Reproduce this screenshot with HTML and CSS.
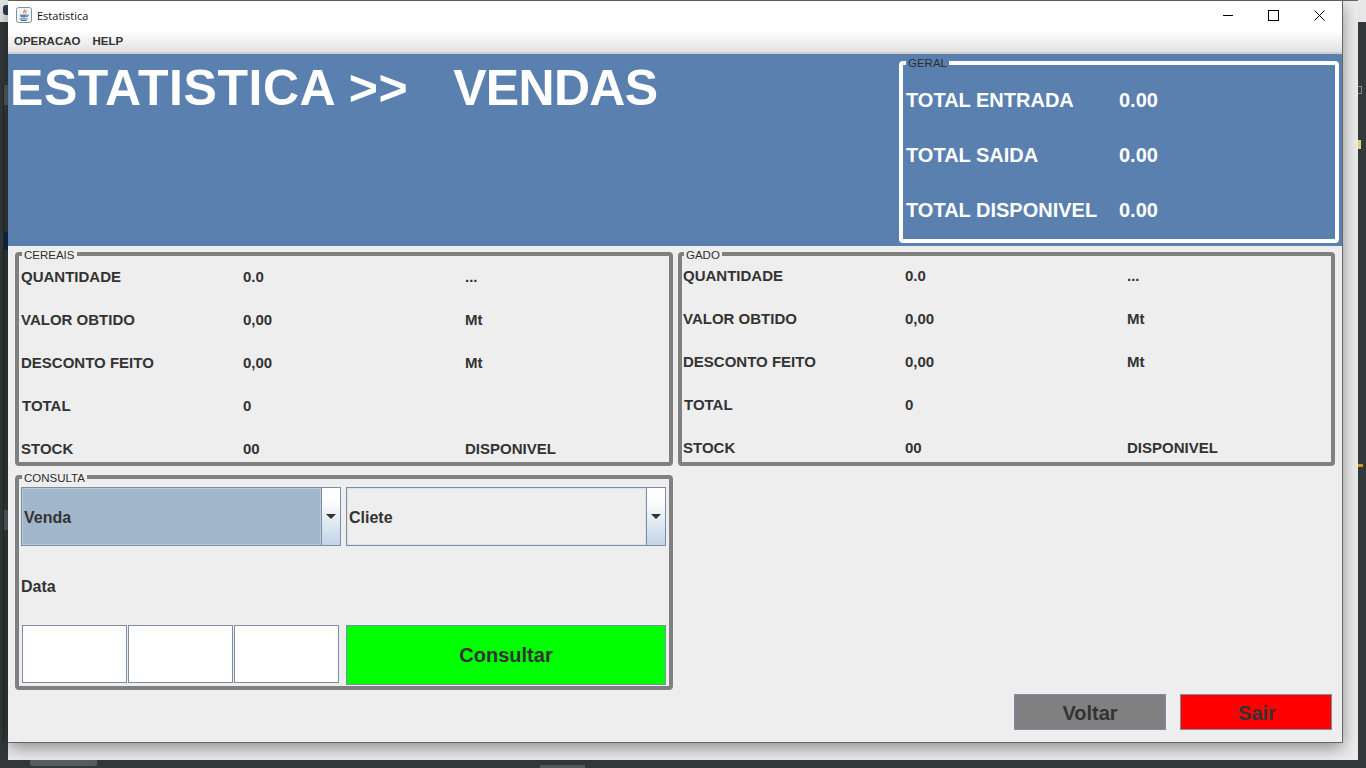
FILE: index.html
```html
<!DOCTYPE html>
<html lang="en">
<head>
    <meta charset="UTF-8">
    <meta name="viewport" content="width=device-width, initial-scale=1.0">
    <title>Estatistica</title>
    <link rel="stylesheet" href="styles.css">
</head>
<body>
    <div class="desktop">
        <!-- Bits of the desktop that show around the window -->
        <div class="top-strip"></div>
        <div class="bit bit-blob"></div>
        <div class="bit bit-line"></div>
        <div class="bit bit-gray-a"></div>
        <div class="bit bit-navy"></div>
        <div class="bit bit-gray-b"></div>
        <div class="bit bit-square"></div>
        <div class="bit bit-yellow"></div>
        <div class="bit bit-orange"></div>
        <div class="bit bit-task-a"></div>
        <div class="bit bit-task-b"></div>

        <div class="back-window"></div>

        <div class="window">
            <div class="titlebar">
                <svg class="app-icon" width="16" height="16" viewBox="0 0 16 16">
                    <rect x="0.5" y="0.5" width="15" height="15" rx="2" fill="#f2f5f8" stroke="#7f8fa0"/>
                    <path d="M8.5 2.5c1 1.2-1.5 2-.8 3.5M10.2 3.5c.5 1-1.5 1.5-.8 2.7" fill="none" stroke="#e2702a" stroke-width="1.1"/>
                    <path d="M4 7.5h6.5c0 1.5-.5 2.5-1.5 3H5.500C4.500 10 4 9 4 7.500z" fill="#5b82a8"/>
                    <path d="M10.500 8h1.500c.8 0 .6 1.500-1.800 1.800M3.500 12h8M5 13.500h5.500" fill="none" stroke="#4a6f96" stroke-width="1"/>
                </svg>
                <span class="title-text">Estatistica</span>
                <div class="window-controls">
                    <svg width="11" height="11" viewBox="0 0 11 11"><path d="M1 5.500h10" stroke="#000" fill="none"/></svg>
                    <svg width="11" height="11" viewBox="0 0 11 11"><rect x="0.5" y="0.5" width="10" height="10" stroke="#000" fill="none"/></svg>
                    <svg width="11" height="11" viewBox="0 0 11 11"><path d="M0.5 0.5l10 10M10.500 0.5l-10 10" stroke="#000" fill="none"/></svg>
                </div>
            </div>

            <div class="menubar">
                <span>OPERACAO</span>
                <span>HELP</span>
            </div>

            <div class="banner">
                <div class="banner-title">
                    <span class="banner-main">ESTATISTICA &gt;&gt;</span>
                    <span class="banner-sub">VENDAS</span>
                </div>
                <div class="group group-white">
                    <span class="group-title">GERAL</span>
                    <div class="totals">
                        <span>TOTAL ENTRADA</span><span>0.00</span>
                        <span>TOTAL SAIDA</span><span>0.00</span>
                        <span>TOTAL DISPONIVEL</span><span>0.00</span>
                    </div>
                </div>
            </div>

            <div class="panels">
                <div class="group">
                    <span class="group-title">CEREAIS</span>
                    <div class="stats">
                        <span>QUANTIDADE</span><span>0.0</span><span>...</span>
                        <span>VALOR OBTIDO</span><span>0,00</span><span>Mt</span>
                        <span>DESCONTO FEITO</span><span>0,00</span><span>Mt</span>
                        <span class="nudge">TOTAL</span><span>0</span><span></span>
                        <span>STOCK</span><span>00</span><span>DISPONIVEL</span>
                    </div>
                </div>

                <div class="group group-gado">
                    <span class="group-title">GADO</span>
                    <div class="stats stats-gado">
                        <span>QUANTIDADE</span><span>0.0</span><span>...</span>
                        <span>VALOR OBTIDO</span><span>0,00</span><span>Mt</span>
                        <span>DESCONTO FEITO</span><span>0,00</span><span>Mt</span>
                        <span class="nudge">TOTAL</span><span>0</span><span></span>
                        <span>STOCK</span><span>00</span><span>DISPONIVEL</span>
                    </div>
                </div>

                <div class="group group-consulta">
                    <span class="group-title">CONSULTA</span>
                    <div class="combos">
                        <div class="combo combo-selected">
                            <span class="combo-value">Venda</span>
                            <span class="combo-arrow"></span>
                        </div>
                        <div class="combo">
                            <span class="combo-value">Cliete</span>
                            <span class="combo-arrow"></span>
                        </div>
                    </div>
                    <div class="date-label">Data</div>
                    <div class="query-row">
                        <div class="date-fields">
                            <div class="field"></div>
                            <div class="field"></div>
                            <div class="field"></div>
                        </div>
                        <div class="btn btn-consultar">Consultar</div>
                    </div>
                </div>
            </div>

            <div class="actions">
                <div class="btn btn-voltar">Voltar</div>
                <div class="btn btn-sair">Sair</div>
            </div>
        </div>
    </div>
</body>
</html>
```

FILE: styles.css
```css
* {
    box-sizing: border-box;
}

html, body {
    margin: 0;
    height: 100%;
    overflow: hidden;
}

body {
    font-family: "Liberation Sans", Arial, sans-serif;
    background-color: #33393b;
}

.desktop {
    position: relative;
    width: 1366px;
    height: 768px;
    overflow: hidden;
}

/* Desktop pieces around the window */
.top-strip {
    position: absolute;
    left: 0;
    top: 0;
    width: 100%;
    height: 22px;
    background-color: #e8e8e8;
}

.bit {
    position: absolute;
}

.bit-blob { left: 3px; top: 5px; width: 5px; height: 10px; background-color: #2c3e55; border-radius: 3px 0 0 3px; }
.bit-line { left: 3px; top: 85px; width: 1px; height: 656px; background-color: #232728; }
.bit-gray-a { left: 4px; top: 85px; width: 4px; height: 20px; background-color: #555b5d; }
.bit-navy { left: 4px; top: 232px; width: 4px; height: 18px; background-color: #0e2a45; }
.bit-gray-b { left: 4px; top: 510px; width: 4px; height: 20px; background-color: #555b5d; }
.bit-square { left: 1358px; top: 86px; width: 4px; height: 8px; border: 1px solid #8a8a8a; border-left: 0; }
.bit-yellow { left: 1358px; top: 140px; width: 3px; height: 9px; background-color: #e8cf7a; }
.bit-orange { left: 1358px; top: 464px; width: 5px; height: 3px; background-color: #d19a12; }
.bit-task-a { left: 30px; top: 758px; width: 67px; height: 8px; background-color: #575f61; border-radius: 0 0 2px 2px; }
.bit-task-b { left: 540px; top: 765px; width: 45px; height: 3px; background-color: #555b5d; }

/* Window behind, the drop shadow falls on it */
.back-window {
    position: absolute;
    left: 8px;
    top: 0;
    width: 1350px;
    height: 760px;
    background-color: #ececec;
    border-top: 1px solid #666;
}

.window {
    position: absolute;
    left: 8px;
    top: 1px;
    width: 1335px;
    height: 742px;
    display: flex;
    flex-direction: column;
    background-color: #eeeeee;
    border-right: 1px solid #666;
    border-bottom: 1px solid #666;
    box-shadow: 0 5px 16px rgba(0, 0, 0, 0.4);
}

.titlebar {
    height: 30px;
    flex: none;
    display: flex;
    align-items: center;
    padding: 0 0 2px 8px;
    background: white;
}

.app-icon {
    flex: none;
}

.title-text {
    margin-left: 5px;
    font-family: "Open Sans", sans-serif;
    font-size: 11px;
    color: #111;
}

.window-controls {
    margin-left: auto;
    display: flex;
    gap: 35px;
    padding-right: 17px;
}

.window-controls svg {
    display: block;
}

.menubar {
    height: 23px;
    flex: none;
    display: flex;
    align-items: center;
    gap: 12px;
    padding: 0 0 1px 6px;
    font-size: 11.5px;
    font-weight: bold;
    color: #333;
    background: linear-gradient(to bottom, #ffffff, #e2e2e2);
    border-bottom: 2px solid #cfcfcf;
}

/* Blue header */
.banner {
    height: 192px;
    flex: none;
    display: flex;
    justify-content: space-between;
    padding: 7px 3px 3px 2px;
    background-color: #5a80af;
}

.banner-title {
    display: flex;
    gap: 45px;
    margin-top: 1px;
    font-size: 50px;
    font-weight: bold;
    line-height: 52px;
    color: white;
}

.banner-main {
    letter-spacing: 0.53px;
}

.banner-sub {
    letter-spacing: -0.7px;
}

/* Titled borders */
.group {
    position: relative;
    border: 4px solid #808080;
    border-radius: 4px;
}

.group-title {
    position: absolute;
    top: -8px;
    left: 3px;
    padding: 0 2px;
    font-size: 11.5px;
    line-height: 14px;
    color: #2e2e2e;
    background-color: #eeeeee;
}

.group-gado .group-title {
    left: 2px;
}

.group-white {
    width: 440px;
    height: 182px;
    border-color: white;
}

.group-white .group-title {
    top: -9px;
    left: 3px;
    background-color: #5a80af;
}

.totals {
    display: grid;
    grid-template-columns: 213px 1fr;
    grid-auto-rows: 23px;
    row-gap: 32px;
    padding: 24px 0 0 3px;
    font-size: 20px;
    font-weight: bold;
    line-height: 23px;
    color: white;
}

/* Cereais, Gado and Consulta panels */
.panels {
    display: grid;
    grid-template-columns: 658px 657px;
    grid-template-rows: 214px 215px;
    column-gap: 5px;
    row-gap: 9px;
    padding: 6px 0 0 7px;
}

.stats {
    display: grid;
    grid-template-columns: 222px 222px 1fr;
    grid-auto-rows: 21px;
    row-gap: 22px;
    padding: 10px 0 0 2px;
    font-size: 15px;
    font-weight: bold;
    line-height: 21px;
    color: #333;
}

.stats-gado {
    padding: 9px 0 0 1px;
}

.nudge {
    margin-left: 1px;
}

.group-consulta {
    padding: 8px 3px 0 2px;
}

.combos {
    display: flex;
    gap: 5px;
}

.combo {
    width: 320px;
    height: 59px;
    display: flex;
    font-size: 16px;
    font-weight: bold;
    line-height: 20px;
    color: #333;
    border: 1px solid #7a8ea5;
}

.combo-value {
    flex: 1;
    display: flex;
    align-items: center;
    padding: 3px 0 0 1px;
    border: 1px solid #dde4ec;
}

.combo-selected .combo-value {
    background-color: #a3b7cc;
    border-color: #b9c9d9;
}

.combo-arrow {
    flex: none;
    width: 19px;
    display: flex;
    align-items: center;
    justify-content: center;
    background: linear-gradient(to bottom, #ffffff 20%, #c2d4e6);
    border-left: 1px solid #7a8ea5;
}

.combo-arrow::after {
    content: "";
    border-left: 5px solid transparent;
    border-right: 5px solid transparent;
    border-top: 5px solid #333;
}

.date-label {
    height: 21px;
    margin-top: 30px;
    font-size: 16px;
    font-weight: bold;
    line-height: 21px;
    color: #333;
}

.query-row {
    display: flex;
    margin-top: 28px;
}

.date-fields {
    display: flex;
    gap: 1px;
    width: 325px;
    padding-left: 1px;
}

.field {
    width: 105px;
    height: 58px;
    background: white;
    border: 1px solid #7a8ea5;
}

.btn {
    display: flex;
    align-items: center;
    justify-content: center;
    font-size: 20px;
    font-weight: bold;
    color: #333;
    border: 1px solid #7a8ea5;
}

.btn-consultar {
    width: 320px;
    height: 60px;
    background-color: #00ff00;
}

/* Bottom right buttons */
.actions {
    display: flex;
    justify-content: flex-end;
    gap: 14px;
    padding: 4px 10px 0 0;
}

.btn-voltar, .btn-sair {
    width: 152px;
    height: 36px;
    padding-top: 2px;
}

.btn-voltar {
    background-color: #808080;
}

.btn-sair {
    padding-left: 2px;
    background-color: #ff0000;
}
```
